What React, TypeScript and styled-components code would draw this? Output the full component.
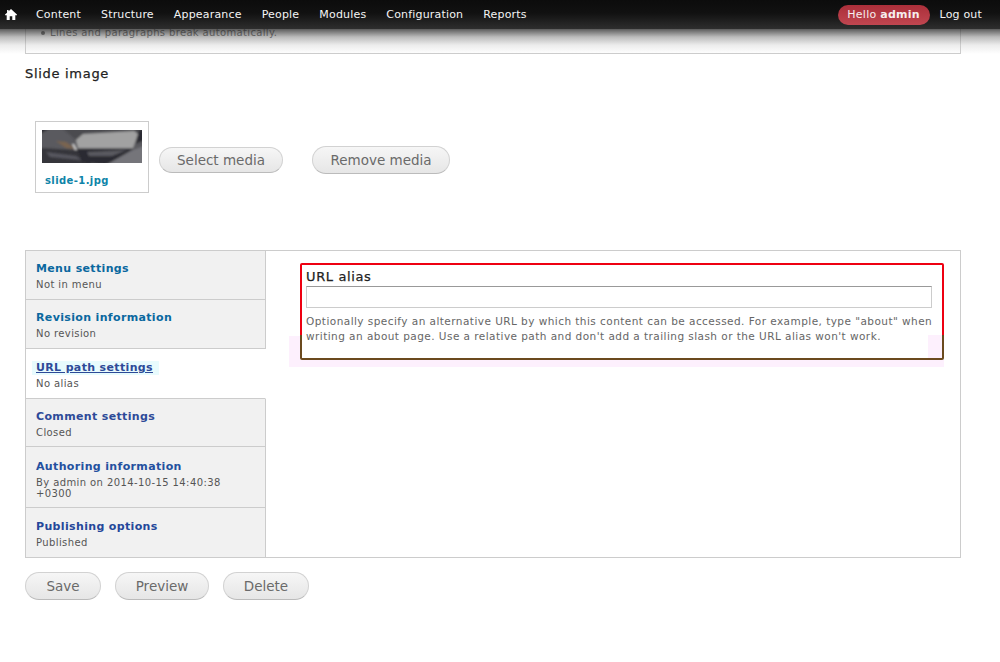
import React from "react";
import styled, { createGlobalStyle } from "styled-components";

const menuItems = ["Content", "Structure", "Appearance", "People", "Modules", "Configuration", "Reports"];

const tabs = [
   { title: "Menu settings", summary: "Not in menu", color: "#0a689f", height: 49, top: 11 },
   { title: "Revision information", summary: "No revision", color: "#0a689f", height: 49, top: 11 },
   { title: "URL path settings", summary: "No alias", color: "#2d4a98", height: 50, top: 12, active: true },
   { title: "Comment settings", summary: "Closed", color: "#2d4a98", height: 49, top: 11 },
   { title: "Authoring information", summary: "By admin on 2014-10-15 14:40:38 +0300", color: "#24509f", height: 61, top: 13 },
   { title: "Publishing options", summary: "Published", color: "#25479a", height: 49, top: 12 },
];

const App = () => {
   return (
      <Page>
         <GlobalStyle />
         <Toolbar>
            <HomeLink aria-label="Home">
               <svg width="12" height="11" viewBox="0 0 13 12">
                  <path fill="#fff" d="M6.5 0 L13 6 L13 6.8 L11.2 6.8 L11.2 12 L7.9 12 L7.9 8 L5.1 8 L5.1 12 L1.8 12 L1.8 6.8 L0 6.8 L0 6 L2.2 4 L2.2 1 L3.9 1 L3.9 2.4 Z" />
               </svg>
            </HomeLink>
            <Menu>
               {menuItems.map((item) => (
                  <MenuItem key={item}>{item}</MenuItem>
               ))}
            </Menu>
            <UserMenu>
               <Hello>Hello <strong>admin</strong></Hello>
               <MenuItem>Log out</MenuItem>
            </UserMenu>
         </Toolbar>
         <Fade />

         <Tips>
            <TipItem>Lines and paragraphs break automatically.</TipItem>
         </Tips>

         <SectionLabel>Slide image</SectionLabel>

         <MediaRow>
            <MediaCard>
               <svg width="100" height="33" viewBox="0 0 100 33">
                  <defs>
                     <filter id="soft"><feGaussianBlur stdDeviation="0.8" /></filter>
                  </defs>
                  <g filter="url(#soft)">
                     <rect x="-2" y="-2" width="104" height="37" fill="#5a5a5e" />
                     <polygon points="-2,-2 8,-2 -2,4" fill="#2c2c30" />
                     <polygon points="20,-2 102,-2 102,4 92,1 41,4 34,10" fill="#4c4c50" />
                     <polygon points="-2,18 36,20 50,35 -2,35" fill="#34343a" />
                     <polygon points="4,22 34,26 40,30 8,27" fill="#56565e" />
                     <polygon points="14,11 24,12 34,19 24,18" fill="#7a6550" />
                     <polygon points="30,14 32,14 35,20 33,20" fill="#d4d4d4" />
                     <polygon points="35,19 91,19 64,35 40,32" fill="#2c2c32" />
                     <polygon points="45,22 85,20 70,26 47,26" fill="#5a5a60" />
                     <polygon points="64,35 91,20 102,16 102,35" fill="#75757a" />
                     <polygon points="96,2 102,-2 102,10 94,14" fill="#2c2c30" />
                     <polygon points="34,10 41,4 92,1 96,4 91,18 36,18" fill="#a2a2a2" />
                  </g>
               </svg>
               <FileLink>slide-1.jpg</FileLink>
            </MediaCard>
            <MediaButton>Select media</MediaButton>
            <MediaButton $large>Remove media</MediaButton>
         </MediaRow>

         <VerticalTabs>
            <TabList>
               {tabs.map((tab) => (
                  <TabItem key={tab.title} $active={tab.active} $height={tab.height} $top={tab.top}>
                     <TabTitle $color={tab.color} $active={tab.active}>{tab.title}</TabTitle>
                     <TabSummary>{tab.summary}</TabSummary>
                  </TabItem>
               ))}
            </TabList>
            <TabPane>
               <AliasWrap>
                  <AliasField>
                     <AliasInner>
                        <FieldLabel>URL alias</FieldLabel>
                        <TextInput type="text" />
                        <Description>
                           Optionally specify an alternative URL by which this content can be accessed. For example, type "about" when writing an about page. Use a relative path and don't add a trailing slash or the URL alias won't work.
                        </Description>
                     </AliasInner>
                  </AliasField>
               </AliasWrap>
            </TabPane>
         </VerticalTabs>

         <Actions>
            <ActionButton $width={76}>Save</ActionButton>
            <ActionButton $width={94}>Preview</ActionButton>
            <ActionButton $width={86}>Delete</ActionButton>
         </Actions>
      </Page>
   );
};

const GlobalStyle = createGlobalStyle`
   html, body {
      margin: 0;
      padding: 0;
      background: #fff;
   }
   body {
      font-family: "DejaVu Sans", Verdana, sans-serif;
      color: #333;
   }
`;

const Page = styled.div`
   position: relative;
   width: 1000px;
   height: 662px;
   padding: 0 39px 0 25px;
   box-sizing: border-box;
   overflow: hidden;
`;

const Toolbar = styled.div`
   position: absolute;
   top: 0;
   left: 0;
   right: 0;
   height: 29px;
   display: flex;
   align-items: center;
   padding: 0 18px 0 5px;
   background: linear-gradient(#0c0c0c, #111 45%, #2e2e2e);
   z-index: 2;
`;

const Fade = styled.div`
   position: absolute;
   top: 29px;
   left: 0;
   right: 0;
   height: 25px;
   background: linear-gradient(rgba(50, 50, 50, 0.8), rgba(120, 120, 120, 0.5) 32%, rgba(200, 200, 200, 0.35) 64%, rgba(255, 255, 255, 0));
   z-index: 1;
`;

const HomeLink = styled.a`
   display: flex;
   width: 12px;
   height: 11px;
   margin-right: 19px;
`;

const Menu = styled.div`
   display: flex;
   gap: 20px;
   flex: 1;
`;

const MenuItem = styled.span`
   font-size: 11px;
   letter-spacing: 0.18px;
   color: #f4f4f4;
`;

const UserMenu = styled.div`
   display: flex;
   align-items: center;
   gap: 10px;
`;

const Hello = styled.span`
   display: block;
   width: 92px;
   height: 20px;
   line-height: 20px;
   box-sizing: border-box;
   text-align: center;
   border-radius: 10px;
   background: linear-gradient(#ab2f3a, #c04650);
   font-size: 11px;
   letter-spacing: 0.25px;
   color: #f6eeee;

   strong {
      font-weight: 700;
   }
`;

const Tips = styled.ul`
   list-style: none;
   margin: 0;
   height: 54px;
   box-sizing: border-box;
   padding: 26px 0 0 13px;
   border: 1px solid #ccc;
   border-top: 0;
`;

const TipItem = styled.li`
   font-size: 10px;
   line-height: 14px;
   letter-spacing: 0.35px;
   color: #555;
   padding-left: 11px;
   position: relative;

   &::before {
      content: "";
      position: absolute;
      left: 2px;
      top: 5px;
      width: 4px;
      height: 4px;
      border-radius: 50%;
      background: #555;
   }
`;

const SectionLabel = styled.div`
   margin-top: 12px;
   font-size: 13px;
   line-height: 16px;
   letter-spacing: 0.7px;
   color: #222;
   -webkit-text-stroke: 0.25px #222;
`;

const MediaRow = styled.div`
   display: flex;
   align-items: center;
   height: 72px;
   margin: 39px 0 57px 10px;
`;

const MediaCard = styled.div`
   display: flex;
   flex-direction: column;
   width: 114px;
   height: 72px;
   box-sizing: border-box;
   padding: 8px 6px 0;
   border: 1px solid #ccc;
   margin-right: 10px;

   svg {
      display: block;
   }
`;

const FileLink = styled.a`
   margin: 11px 0 0 3px;
   font-size: 10px;
   line-height: 14px;
   font-weight: 700;
   letter-spacing: 0.4px;
   color: #0f84a8;
`;

const Pill = styled.button`
   box-sizing: border-box;
   padding: 0;
   border: 1px solid #d2d2d2;
   border-bottom-color: #bbb;
   background: linear-gradient(#f6f6f6, #e6e6e6);
   font-family: "DejaVu Sans", Verdana, sans-serif;
   font-size: 13.5px;
   color: #6a6a6a;
`;

const MediaButton = styled(Pill)<{ $large?: boolean }>`
   width: ${(p) => (p.$large ? "138px" : "124px")};
   height: ${(p) => (p.$large ? "28px" : "26px")};
   margin: 6px 0 0 ${(p) => (p.$large ? "29px" : "0")};
   border-radius: 14px;
`;

const VerticalTabs = styled.div`
   display: flex;
   height: 308px;
   box-sizing: border-box;
   border: 1px solid #ccc;
`;

const TabList = styled.div`
   display: flex;
   flex-direction: column;
   width: 240px;
   flex: none;
`;

const TabItem = styled.div<{ $active?: boolean; $height: number; $top: number }>`
   height: ${(p) => p.$height}px;
   box-sizing: border-box;
   padding: ${(p) => p.$top}px 10px 0;
   background: ${(p) => (p.$active ? "#fff" : "#f1f1f1")};
   border-right: 1px solid ${(p) => (p.$active ? "#fff" : "#ccc")};
   border-bottom: 1px solid #ccc;

   &:last-child {
      border-bottom: 0;
   }
`;

const TabTitle = styled.div<{ $color: string; $active?: boolean }>`
   width: fit-content;
   font-size: 11px;
   line-height: 14px;
   font-weight: 700;
   letter-spacing: 0.35px;
   color: ${(p) => p.$color};
   text-decoration: ${(p) => (p.$active ? "underline" : "none")};
   ${(p) => p.$active && "background: #e8fbfd; padding: 0 6px 0 4px; margin-left: -4px;"}
`;

const TabSummary = styled.div`
   margin-top: 3px;
   font-size: 10px;
   line-height: 11px;
   letter-spacing: 0.4px;
   color: #555;
`;

const TabPane = styled.div`
   flex: 1;
   padding: 12px 16px 0 34px;
`;

const AliasWrap = styled.div`
   position: relative;
   z-index: 0;

   &::before {
      content: "";
      position: absolute;
      z-index: -1;
      left: -11px;
      right: 0;
      top: 73px;
      bottom: -7px;
      background: #fdf0fd;
   }
`;

const AliasField = styled.div`
   height: 97px;
   padding: 2px;
   box-sizing: border-box;
   border-radius: 2px;
   background: linear-gradient(#ee0011 0, #ee0011 72px, #6b4a1e 72px);
`;

const AliasInner = styled.div`
   height: 93px;
   box-sizing: border-box;
   padding: 4px 8px 0 4px;
   background:
      linear-gradient(#fff, #fff) 0 0 / calc(100% - 14px) 100% no-repeat,
      linear-gradient(#fff 0, #fff 70px, #fdf0fd 70px, #fdf0fd 86px) 100% 0 / 14px 100% no-repeat,
      linear-gradient(#fff 0, #fff 86px, #fdf0fd 86px);
`;

const FieldLabel = styled.div`
   font-size: 13px;
   line-height: 15px;
   letter-spacing: 0.63px;
   color: #222;
   -webkit-text-stroke: 0.25px #222;
`;

const TextInput = styled.input`
   display: block;
   width: 626px;
   height: 22px;
   margin: 2px 0 0;
   padding: 0;
   box-sizing: border-box;
   border: 1px solid #ccc;
   border-top-color: #999;
   background: #fff;
`;

const Description = styled.div`
   margin-top: 6px;
   font-size: 10.5px;
   line-height: 15px;
   letter-spacing: 0.45px;
   color: #666;
`;

const Actions = styled.div`
   display: flex;
   gap: 14px;
   margin-top: 14px;
`;

const ActionButton = styled(Pill)<{ $width: number }>`
   width: ${(p) => p.$width}px;
   height: 28px;
   border-radius: 14px;
`;

export default App;
